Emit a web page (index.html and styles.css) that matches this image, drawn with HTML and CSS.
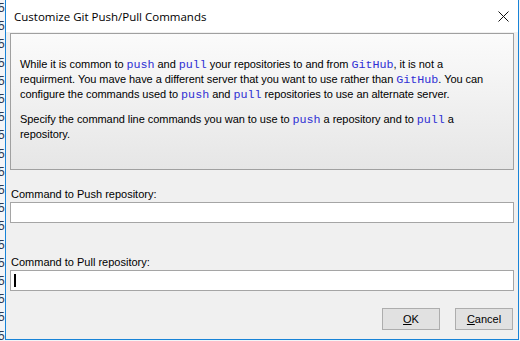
FILE: index.html
```html
<!DOCTYPE html>
<html lang="en">
<head>
  <meta charset="UTF-8">
  <title>Customize Git Push/Pull Commands</title>
  <link rel="stylesheet" href="styles.css">
</head>
<body>
  <div class="screen">
    <div class="backdrop">
      <div>5<i>,</i></div><div>5<i>,</i></div><div>5<i>,</i></div><div>5<i>,</i></div>
      <div>5<i>,</i></div><div>5<i>,</i></div><div>5<i>,</i></div><div>5<i>,</i></div>
      <div>5<i>,</i></div><div>5<i>,</i></div><div>5<i>,</i></div><div>5<i>,</i></div>
      <div>5<i>,</i></div><div>5<i>,</i></div><div>5<i>,</i></div><div>5<i>,</i></div>
      <div>5<i>,</i></div><div>5<i>,</i></div><div>5<i>,</i></div>
    </div>
    <div class="dialog">
      <div class="titlebar">
        <span class="title">Customize Git Push/Pull Commands</span>
        <svg class="close" width="11" height="11" viewBox="0 0 11 11">
          <path d="M0.5 0.5 L10.5 10.5 M10.5 0.5 L0.5 10.5" stroke="#111" stroke-width="1" fill="none"/>
        </svg>
      </div>
      <div class="content">
        <div class="info">
          <p>While it is common to <code>push</code> and <code>pull</code> your repositories to and from <code>GitHub</code>, it is not a<br>
          requirment. You mave have a different server that you want to use rather than <code>GitHub</code>. You can<br>
          configure the commands used to <code>push</code> and <code>pull</code> repositories to use an alternate server.</p>
          <p>Specify the command line commands you wan to use to <code>push</code> a repository and to <code>pull</code> a<br>
          repository.</p>
        </div>
        <div class="label first">Command to Push repository:</div>
        <div class="field"></div>
        <div class="label">Command to Pull repository:</div>
        <div class="field"><span class="caret"></span></div>
        <div class="buttons">
          <button class="btn"><u>O</u>K</button>
          <button class="btn"><u>C</u>ancel</button>
        </div>
      </div>
    </div>
  </div>
</body>
</html>
```

FILE: styles.css
```css
body {
  margin: 0;
  background: #f4f5f7;
  font-family: 'Liberation Sans', Arial, sans-serif;
  font-size: 11px;
  color: #000;
}
.screen {
  display: flex;
  height: 341px;
  overflow: hidden;
}
.backdrop {
  width: 5px;
  overflow: hidden;
  font-size: 12px;
  line-height: 18.2px;
  margin-top: -1px;
  color: #2b3a55;
}
.backdrop div { margin-left: -2px; white-space: nowrap; }
.backdrop i { font-style: normal; color: #d08a1a; }
.dialog {
  width: 512px;
  height: 339px;
  border: 1px solid #1883d7;
  border-top: none;
  background: #f0f0f0;
  display: flex;
  flex-direction: column;
}
.titlebar {
  height: 32px;
  background: #fff;
  display: flex;
  align-items: center;
  justify-content: space-between;
  padding: 0 9px 0 8px;
}
.title {
  font-family: 'Open Sans', 'Noto Sans', sans-serif;
  font-size: 11.5px;
  color: #000;
}
.close { display: block; }
.content {
  padding: 1px 4px 0 4px;
  display: flex;
  flex-direction: column;
}
.info {
  height: 137px;
  box-sizing: border-box;
  border: 1px solid #a0a0a0;
  background: linear-gradient(#fbfbfb, #e6e6e6);
  padding: 23px 8px 0 9px;
}
.info p {
  margin: 0 0 10px;
  line-height: 14px;
  white-space: nowrap;
  letter-spacing: -0.05px;
}
.info code {
  font-family: 'Liberation Mono', 'Courier New', monospace;
  font-size: 11.7px;
  color: #3030d4;
  letter-spacing: 0;
}
.label {
  line-height: 14px;
  margin-top: 32px;
  padding-left: 1px;
}
.label.first { margin-top: 17px; }
.field {
  height: 21px;
  box-sizing: border-box;
  margin-top: 1px;
  border: 1px solid #a5a5a5;
  background: #fff;
  padding: 3px 0 0 3px;
}
.caret {
  display: block;
  width: 2px;
  height: 13px;
  background: #000;
}
.buttons {
  display: flex;
  justify-content: flex-end;
  gap: 15px;
  margin-top: 17px;
  padding-right: 1px;
}
.btn {
  width: 58px;
  height: 22px;
  box-sizing: border-box;
  border: 1px solid #adadad;
  background: #e1e1e1;
  font-family: 'Liberation Sans', Arial, sans-serif;
  font-size: 11px;
  color: #000;
  padding: 0;
}
```
